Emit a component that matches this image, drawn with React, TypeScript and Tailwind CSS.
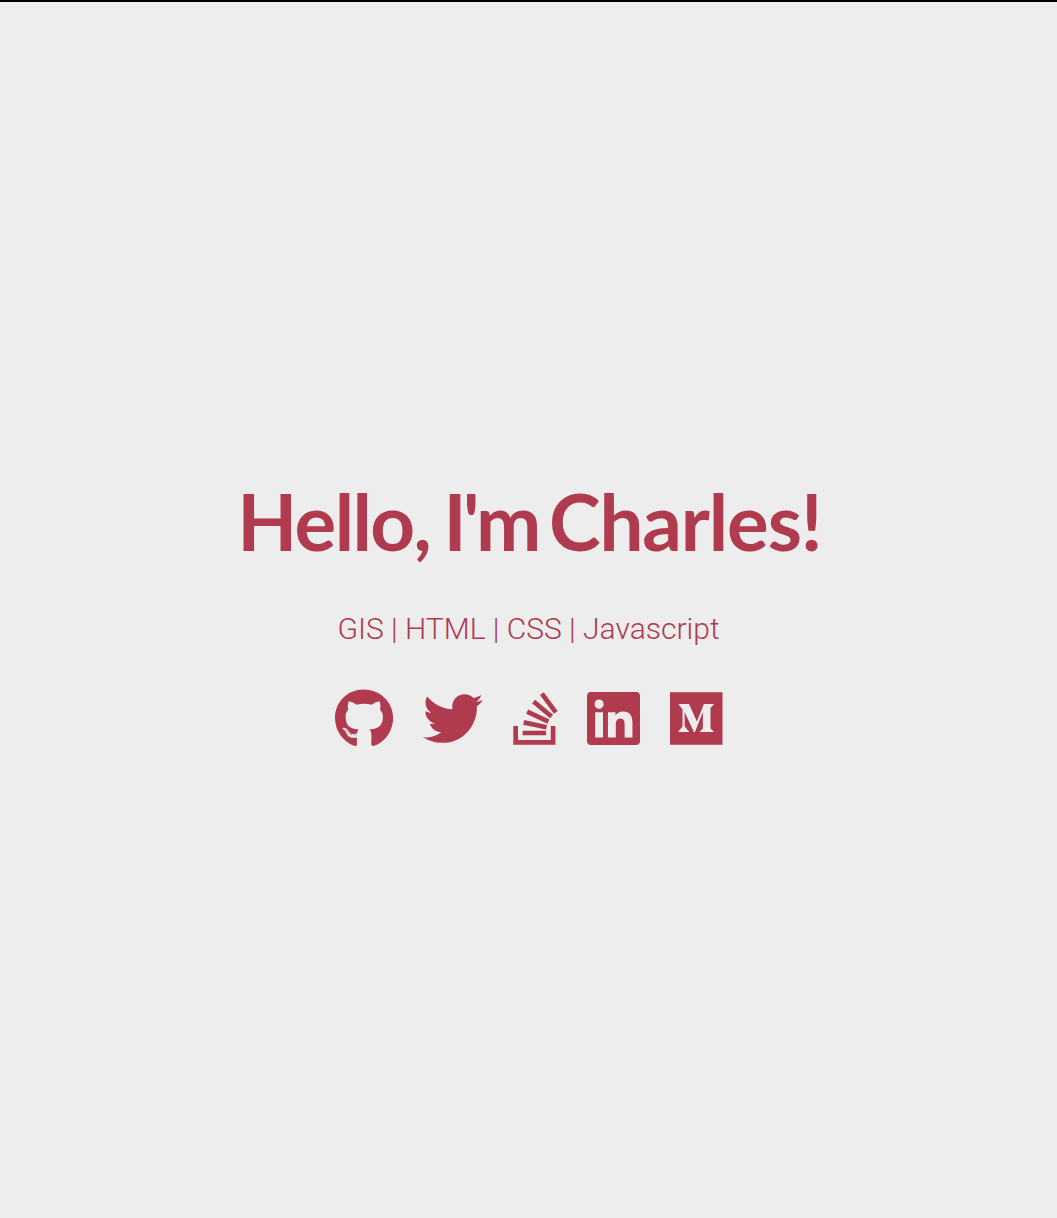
import React from "react";
import { FaGithub, FaTwitter, FaStackOverflow, FaLinkedin } from "react-icons/fa";

const links = [
  { name: "GitHub", Icon: FaGithub, box: "w-[58.1px]" },
  { name: "Twitter", Icon: FaTwitter, box: "w-[60px]" },
  { name: "Stack Overflow", Icon: FaStackOverflow, box: "w-[45px]" },
  { name: "LinkedIn", Icon: FaLinkedin, box: "w-[53px]" },
];

export default function App() {
  return (
    <main className="flex h-screen flex-col items-center border-t-2 border-black bg-[#ededed] pt-[471px] text-[#b03a4e]">
      <h1 className="h-[96px] whitespace-nowrap pl-[2px] font-['Lato',sans-serif] text-[78px] font-bold leading-[96px] [word-spacing:-4px]">
        <span className="tracking-[-1.6px]">Hello, </span>
        <span className="tracking-[-3.6px]">I'm </span>
        <span className="tracking-[-1.1px]">Charles!</span>
      </h1>
      <p className="mt-[42px] whitespace-nowrap font-['Roboto',sans-serif] text-[30px] font-light leading-[36px]">
        GIS | HTML | CSS | Javascript
      </p>
      <nav className="mt-[41px] flex h-[61px] items-center gap-[29.7px] pl-px">
        {links.map(({ name, Icon, box }) => (
          <a key={name} href="#" aria-label={name} className={box}>
            <Icon className="h-[61px] w-full" />
          </a>
        ))}
        <a href="#" aria-label="Medium" className="w-[52.5px]">
          <svg viewBox="0 0 448 512" className="h-[61px] w-full fill-current">
            <path d="M0 32v448h448V32H0zm372.2 106.1l-24 23c-2.1 1.6-3.1 4.2-2.7 6.7v169.3c-.4 2.6.6 5.2 2.7 6.7l23.5 23v5.1h-118V367l24.3-23.6c2.4-2.4 2.4-3.1 2.4-6.7V199.8l-67.6 171.6h-9.1L125 199.8v115c-.7 4.8 1 9.7 4.4 13.2l31.6 38.3v5.1H71.2v-5.1l31.6-38.3c3.4-3.5 4.9-8.4 4.1-13.2v-133c.4-3.7-1-7.3-3.8-9.8L75 138.1V133h87.3l67.4 148L289 133.1h83.2v5z" />
          </svg>
        </a>
      </nav>
    </main>
  );
}
